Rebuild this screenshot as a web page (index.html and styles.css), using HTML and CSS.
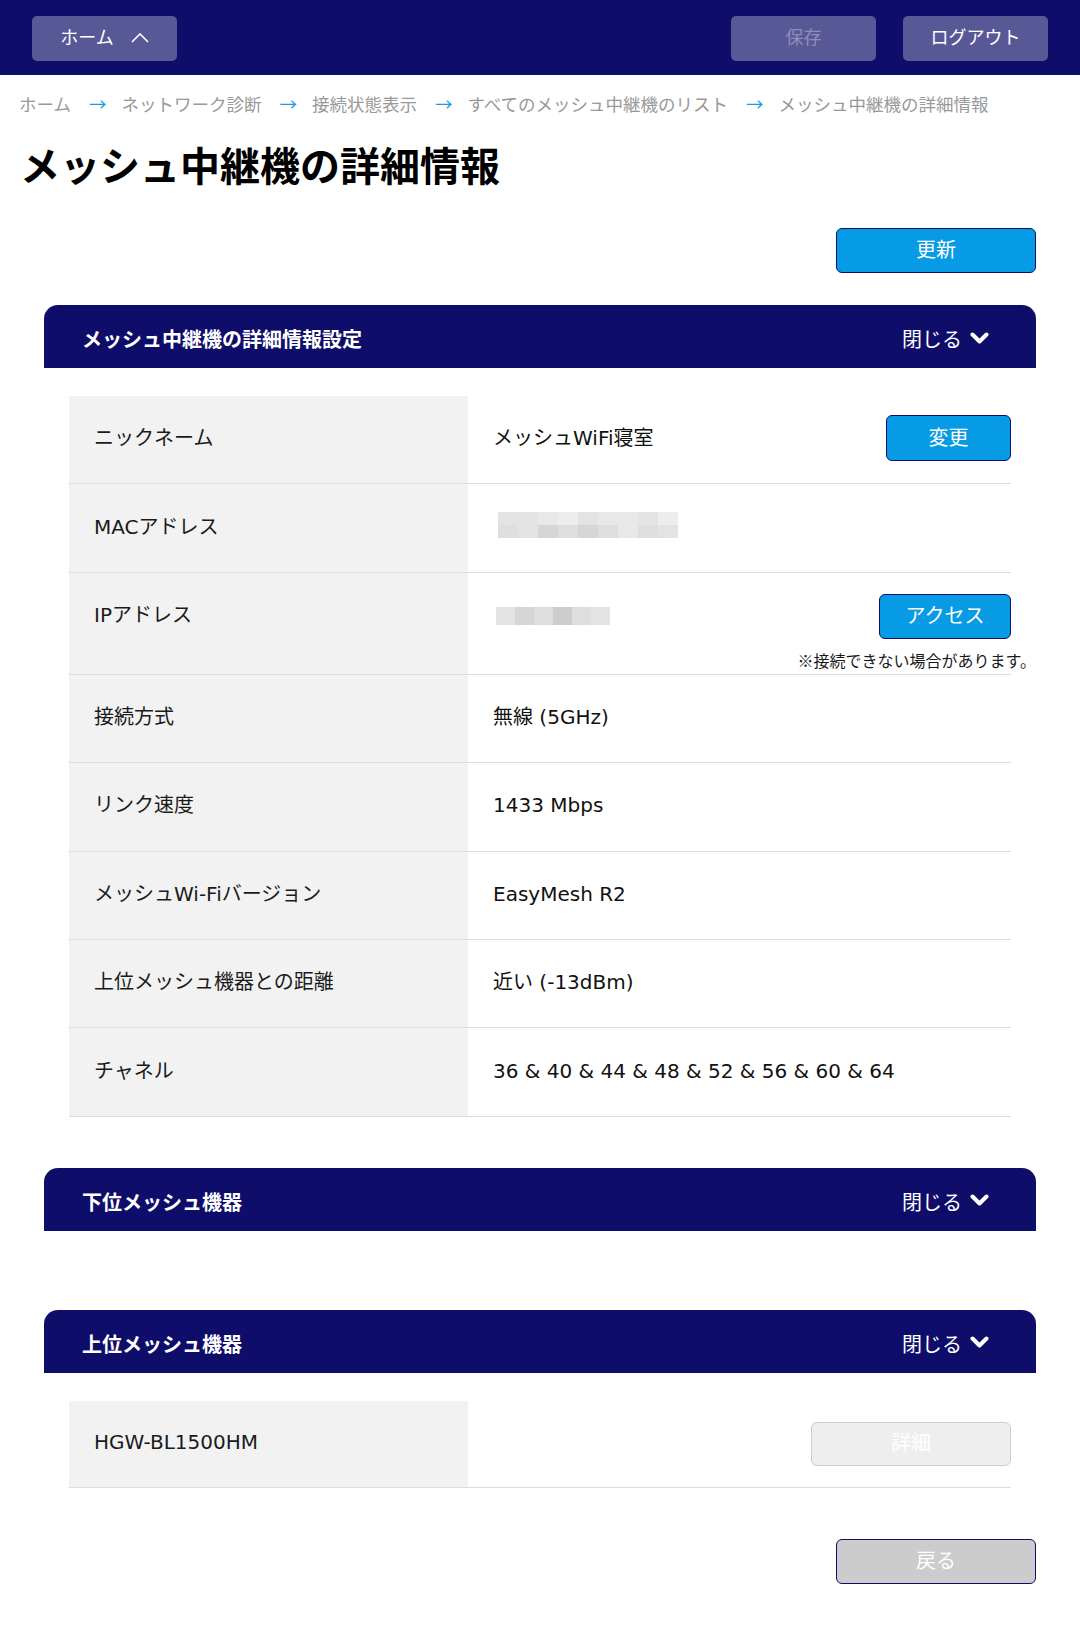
FILE: index.html
```html
<!DOCTYPE html>
<html lang="ja">
<head>
<meta charset="utf-8">
<title>メッシュ中継機の詳細情報</title>
<link rel="stylesheet" href="styles.css">
</head>
<body>
<header class="topbar">
  <button class="nav-btn">ホーム
    <svg class="up" width="18" height="11" viewBox="0 0 18 11"><polyline points="1,10 9,2 17,10" fill="none" stroke="#fff" stroke-width="1.6"/></svg>
  </button>
  <div class="topbar-right">
    <button class="nav-btn disabled">保存</button>
    <button class="nav-btn">ログアウト</button>
  </div>
</header>

<nav class="crumbs">
  <span>ホーム</span><span class="arrow">→</span>
  <span>ネットワーク診断</span><span class="arrow">→</span>
  <span>接続状態表示</span><span class="arrow">→</span>
  <span>すべてのメッシュ中継機のリスト</span><span class="arrow">→</span>
  <span>メッシュ中継機の詳細情報</span>
</nav>

<h1 class="title">メッシュ中継機の詳細情報</h1>

<main class="content">
  <div class="actions">
    <button class="btn primary wide">更新</button>
  </div>

  <section class="panel">
    <div class="panel-head">
      <h2>メッシュ中継機の詳細情報設定</h2>
      <span class="toggle">閉じる
        <svg width="19" height="13" viewBox="0 0 19 13"><polyline points="2.5,2.5 9.5,9.5 16.5,2.5" fill="none" stroke="#fff" stroke-width="4" stroke-linecap="round" stroke-linejoin="round"/></svg>
      </span>
    </div>
    <div class="panel-body">
      <div class="table">
        <div class="row">
          <div class="cell-label">ニックネーム</div>
          <div class="cell-value">
            <span>メッシュWiFi寝室</span>
            <button class="btn primary change">変更</button>
          </div>
        </div>
        <div class="row">
          <div class="cell-label">MACアドレス</div>
          <div class="cell-value">
            <div class="mosaic mac">
              <span class="m1"></span><span class="m1"></span><span class="m5"></span><span class="m2"></span><span class="m1"></span><span class="m5"></span><span class="m5"></span><span class="m1"></span><span class="m2"></span>
              <span class="m4"></span><span class="m1"></span><span class="m3"></span><span class="m4"></span><span class="m3"></span><span class="m4"></span><span class="m5"></span><span class="m4"></span><span class="m1"></span>
            </div>
          </div>
        </div>
        <div class="row tall">
          <div class="cell-label">IPアドレス</div>
          <div class="cell-value stack">
            <div class="line">
              <div class="mosaic ip">
                <span class="m1"></span><span class="m3"></span><span class="m4"></span><span class="m6"></span><span class="m4"></span><span class="m1"></span>
              </div>
              <button class="btn primary access">アクセス</button>
            </div>
            <p class="note">※接続できない場合があります。</p>
          </div>
        </div>
        <div class="row">
          <div class="cell-label">接続方式</div>
          <div class="cell-value">無線 (5GHz)</div>
        </div>
        <div class="row">
          <div class="cell-label">リンク速度</div>
          <div class="cell-value">1433 Mbps</div>
        </div>
        <div class="row">
          <div class="cell-label">メッシュWi-Fiバージョン</div>
          <div class="cell-value">EasyMesh R2</div>
        </div>
        <div class="row">
          <div class="cell-label">上位メッシュ機器との距離</div>
          <div class="cell-value">近い (-13dBm)</div>
        </div>
        <div class="row">
          <div class="cell-label">チャネル</div>
          <div class="cell-value">36 &amp; 40 &amp; 44 &amp; 48 &amp; 52 &amp; 56 &amp; 60 &amp; 64</div>
        </div>
      </div>
    </div>
  </section>

  <section class="panel">
    <div class="panel-head">
      <h2>下位メッシュ機器</h2>
      <span class="toggle">閉じる
        <svg width="19" height="13" viewBox="0 0 19 13"><polyline points="2.5,2.5 9.5,9.5 16.5,2.5" fill="none" stroke="#fff" stroke-width="4" stroke-linecap="round" stroke-linejoin="round"/></svg>
      </span>
    </div>
    <div class="panel-body"></div>
  </section>

  <section class="panel">
    <div class="panel-head">
      <h2>上位メッシュ機器</h2>
      <span class="toggle">閉じる
        <svg width="19" height="13" viewBox="0 0 19 13"><polyline points="2.5,2.5 9.5,9.5 16.5,2.5" fill="none" stroke="#fff" stroke-width="4" stroke-linecap="round" stroke-linejoin="round"/></svg>
      </span>
    </div>
    <div class="panel-body">
      <div class="table">
        <div class="row single">
          <div class="cell-label">HGW-BL1500HM</div>
          <div class="cell-value end">
            <button class="btn muted detail">詳細</button>
          </div>
        </div>
      </div>
    </div>
  </section>

  <div class="actions bottom">
    <button class="btn back wide">戻る</button>
  </div>
</main>
</body>
</html>
```

FILE: styles.css
```css
* {
  box-sizing: border-box;
}

body {
  margin: 0;
  background: #ffffff;
  color: #1a1a1a;
  font-family: "DejaVu Sans", "Noto Sans CJK JP", sans-serif;
}

button {
  font-family: "Noto Sans CJK JP", sans-serif;
  cursor: pointer;
  padding: 0;
}

/* top bar */
.topbar {
  height: 75px;
  background: #0e0e6a;
  display: flex;
  justify-content: space-between;
  align-items: flex-start;
  padding: 16px 32px 0;
}

.topbar-right {
  display: flex;
  gap: 27px;
}

.nav-btn {
  width: 145px;
  height: 45px;
  border: none;
  border-radius: 5px;
  background: #595896;
  color: #ffffff;
  font-size: 18px;
  display: flex;
  align-items: center;
  justify-content: center;
  gap: 17px;
  padding-bottom: 5px;
}

.nav-btn .up {
  margin-top: 2px;
}

.nav-btn.disabled {
  color: #8e8dba;
}

/* breadcrumbs */
.crumbs {
  display: flex;
  align-items: center;
  padding: 16px 19px 0;
  font-family: "Noto Sans CJK JP", sans-serif;
  font-size: 17.5px;
  line-height: 26px;
  color: #999999;
}

.crumbs .arrow {
  color: #1a9be6;
  margin: 0 15px 0 18px;
}

.title {
  margin: 23px 0 0;
  padding-left: 20px;
  font-family: "Noto Sans CJK JP", sans-serif;
  font-size: 40px;
  line-height: 48px;
  font-weight: 700;
  color: #000000;
}

/* content */
.content {
  padding: 0 44px 49px;
}

.actions {
  display: flex;
  justify-content: flex-end;
  margin-top: 40px;
}

.actions.bottom {
  margin-top: 0;
}

.btn {
  height: 45px;
  border: 1px solid #0e0e6a;
  border-radius: 6px;
  color: #ffffff;
  font-size: 20px;
  display: flex;
  align-items: center;
  justify-content: center;
  padding-bottom: 4px;
}

.btn.primary {
  background: #089be5;
}

.btn.wide {
  width: 200px;
}

.btn.change {
  width: 125px;
  height: 46px;
}

.btn.access {
  width: 132px;
}

.btn.muted {
  background: #eeeeee;
  border-color: #cccccc;
}

.btn.detail {
  width: 200px;
  height: 44px;
}

.btn.back {
  background: #cccccc;
}

/* panels */
.panel {
  margin-top: 32px;
}

.panel + .panel {
  margin-top: 0;
}

.panel-head {
  height: 63px;
  background: #0e0e6a;
  border-radius: 14px 14px 0 0;
  display: flex;
  align-items: center;
  justify-content: space-between;
  padding: 4px 47px 0 38px;
  color: #ffffff;
  font-family: "Noto Sans CJK JP", sans-serif;
}

.panel-head h2 {
  margin: 0;
  font-size: 20px;
  font-weight: 700;
}

.toggle {
  display: flex;
  align-items: center;
  gap: 8px;
  font-size: 20px;
}

.toggle svg {
  margin-top: -1px;
}

.panel-body {
  padding: 28px 25px 51px;
}

/* table */
.row {
  display: grid;
  grid-template-columns: 399px 1fr;
  min-height: 88.4px;
  border-bottom: 1px solid #dcdcdc;
}

.row.single {
  min-height: 87px;
}

.cell-label {
  background: #f2f2f2;
  padding: 0 25px 3px;
  display: flex;
  align-items: center;
  font-size: 20px;
  line-height: 30px;
}

.cell-value {
  padding: 0 0 3px 25px;
  display: flex;
  align-items: center;
  justify-content: space-between;
  font-size: 20px;
  line-height: 30px;
  color: #111111;
}

.cell-value.end {
  justify-content: flex-end;
  padding-bottom: 0;
}

.row.tall .cell-label {
  align-items: flex-start;
  padding-top: 27px;
}

.cell-value.stack {
  flex-direction: column;
  align-items: stretch;
  justify-content: flex-start;
  padding-top: 21px;
  padding-bottom: 4px;
}

.cell-value.stack .line {
  display: flex;
  align-items: center;
  justify-content: space-between;
}

.note {
  margin: 11px -25px 0 0;
  text-align: right;
  font-family: "Noto Sans CJK JP", sans-serif;
  font-size: 16px;
  line-height: 20px;
  color: #1a1a1a;
}

/* blurred values */
.mosaic {
  display: grid;
}

.mosaic.mac {
  grid-template-columns: repeat(9, 20px);
  grid-auto-rows: 13px;
  margin-left: 5px;
  margin-top: -3px;
}

.mosaic.ip {
  grid-template-columns: repeat(6, 19px);
  grid-auto-rows: 18px;
  margin-left: 3px;
}

.m1 { background: #e3e3e3; }
.m2 { background: #ededed; }
.m3 { background: #d6d6d6; }
.m4 { background: #dedede; }
.m5 { background: #e8e8e8; }
.m6 { background: #cdcdcd; }
```
